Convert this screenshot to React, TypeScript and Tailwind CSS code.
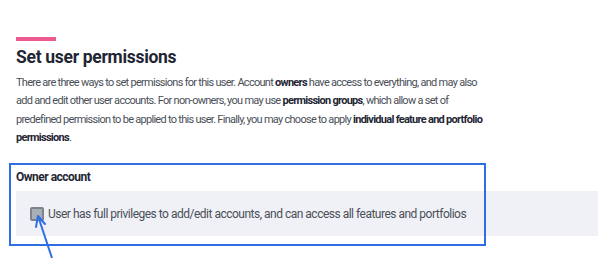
import React from 'react';

export default function App() {
    return (
        <div className="relative w-[600px] h-[258px] overflow-hidden bg-white pl-4 pr-[2px] pt-[37px]" style={{ fontFamily: 'Roboto, "Liberation Sans", sans-serif' }}>
            {/* Accent bar */}
            <div className="w-10 h-1 bg-[#ec5a8f]" />

            <h2 className="mt-[4px] text-[17.5px] leading-6 font-bold tracking-[-0.3px] text-[#1f2633]">Set user permissions</h2>

            <p className="mt-[4.5px] w-[473px] text-[11px] leading-[18.5px] tracking-[-0.72px] text-[#4a4f58]">
                There are three ways to set permissions for this user. Account <b className="text-[#1f2633]">owners</b> have access to everything, and may also add and edit other user accounts. For non-owners, you may use <b className="text-[#1f2633]">permission groups</b>, which allow a set of predefined permission to be applied to this user. Finally, you may choose to apply <b className="text-[#1f2633]">individual feature and portfolio permissions</b>.
            </p>

            <div className="mt-[21.5px] text-[12px] leading-4 font-bold tracking-[-0.5px] text-[#1f2633]">Owner account</div>

            <div className="mt-[6px] h-[45px] bg-[#f0f1f6] flex items-center pl-[14px] gap-[4px]">
                <span className="w-[14px] h-[14px] rounded-[2px] border-2 border-[#7d838d] bg-[#a9aeb7]" />
                <span className="text-[12px] tracking-[-0.5px] text-[#4a4f58]">User has full privileges to add/edit accounts, and can access all features and portfolios</span>
            </div>

            {/* Annotation overlay */}
            <div className="absolute left-[9px] top-[163px] w-[477px] h-[83px] border-2 border-[#2f6fe3] pointer-events-none" />
            <svg className="absolute left-0 top-0 pointer-events-none" width="600" height="258" viewBox="0 0 600 258">
                <line x1="52" y1="258" x2="39" y2="219" stroke="#2f6fe3" strokeWidth="2" />
                <path d="M38 216 L36 227 M38 216 L45 224" stroke="#2f6fe3" strokeWidth="2" fill="none" strokeLinecap="round" />
            </svg>
        </div>
    );
}
